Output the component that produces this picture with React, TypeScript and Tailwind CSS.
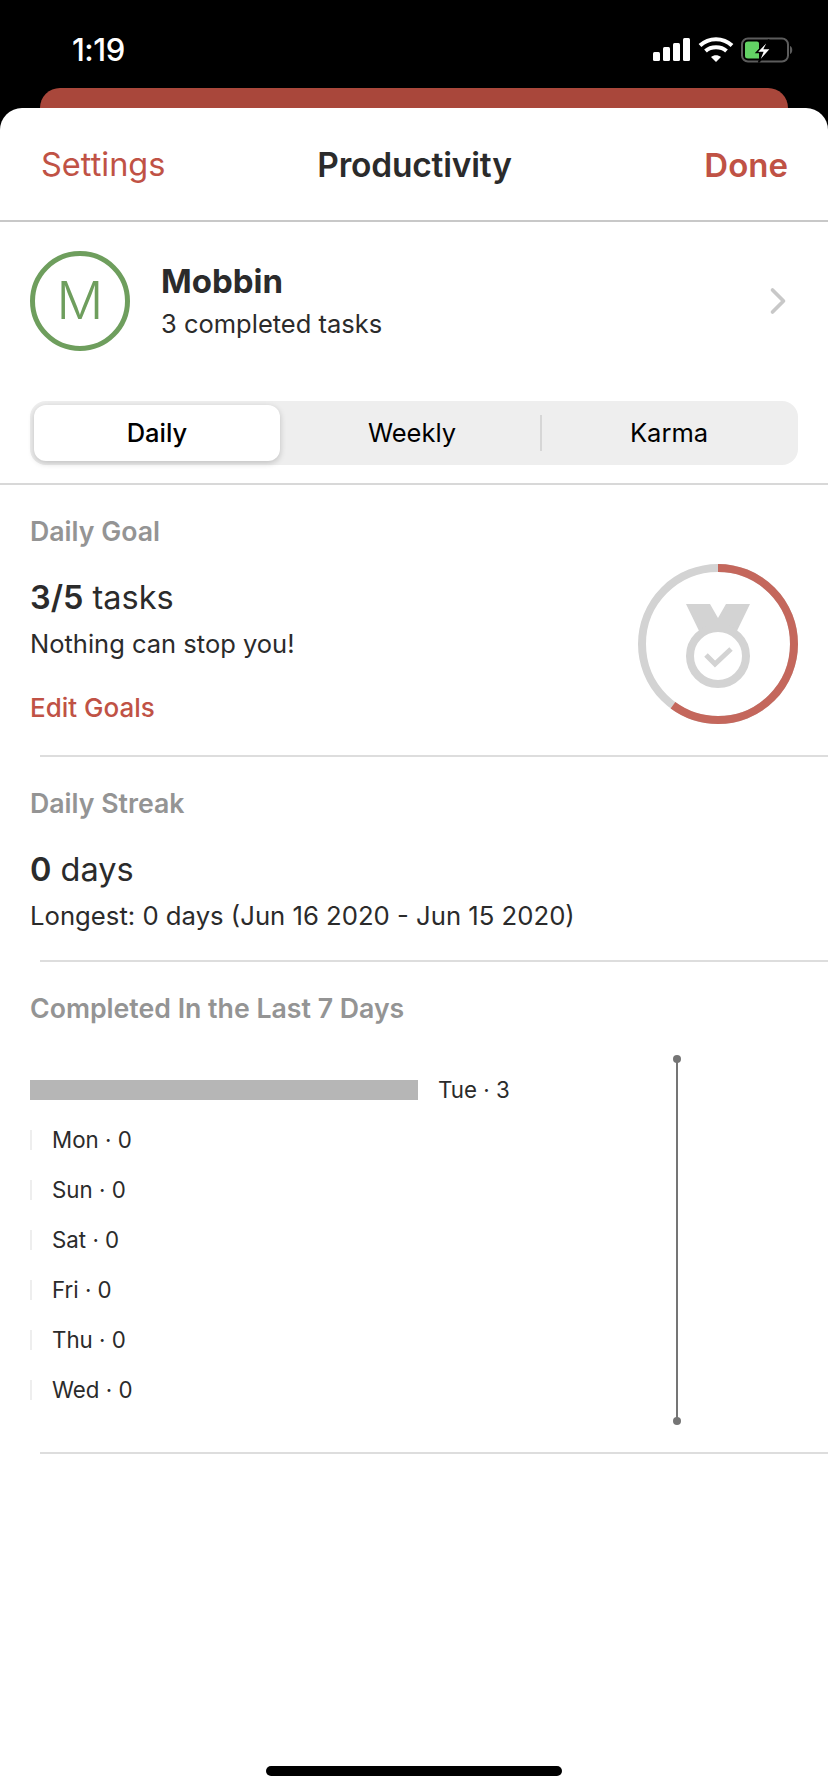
import { ChevronRight } from "lucide-react";

const days = ["Mon", "Sun", "Sat", "Fri", "Thu", "Wed"];

function StatusIcons() {
  return (
    <svg width="142" height="26" viewBox="0 0 142 26" className="block">
      {/* signal */}
      <rect x="1" y="15" width="7" height="9" rx="1.5" fill="#fff" />
      <rect x="11" y="10" width="7" height="14" rx="1.5" fill="#fff" />
      <rect x="21" y="6" width="7" height="18" rx="1.5" fill="#fff" />
      <rect x="31" y="1" width="7" height="23" rx="1.5" fill="#fff" />
      {/* wifi */}
      <path d="M48 8.5 C57 0 71 0 80 8.5" fill="none" stroke="#fff" strokeWidth="4" />
      <path d="M53.500 14 C59 9 69 9 74.500 14" fill="none" stroke="#fff" strokeWidth="4" />
      <path d="M59 20 C62 17.500 66 17.500 69 20 L64 25 Z" fill="#fff" />
      {/* battery */}
      <rect x="90" y="1.500" width="46" height="23" rx="6" fill="none" stroke="#5c5c5c" strokeWidth="2" />
      <path d="M138 9 C141 10 141 16 138 17 Z" fill="#5c5c5c" />
      <path d="M96 4.500 H105 Q107 4.500 107 6.500 V12 L103.500 16 H107 V21.500 H96 Q93 21.500 93 19 V7 Q93 4.500 96 4.500 Z" fill="#63d265" />
      <path d="M117 2.500 L104.500 15.500 H110.500 L106.500 25.500 L119 11.500 H112.500 Z" fill="#fff" stroke="#000" strokeWidth="1.500" />
    </svg>
  );
}

function Medal() {
  return (
    <svg width="160" height="160" viewBox="0 0 160 160" className="block">
      <circle cx="80" cy="80" r="76" fill="none" stroke="#d3d3d3" strokeWidth="8" />
      <circle
        cx="80"
        cy="80"
        r="76"
        fill="none"
        stroke="#c4675c"
        strokeWidth="8"
        strokeDasharray="286.500 477.500"
        transform="rotate(-90 80 80)"
      />
      <path d="M48 40 H72 L80 54 L88 40 H112 L97 71 C88 64 72 64 63 71 Z" fill="#d3d3d3" />
      <circle cx="80" cy="92" r="28" fill="none" stroke="#d3d3d3" strokeWidth="8" />
      <path d="M68 91 L77 100 L93 85" fill="none" stroke="#d3d3d3" strokeWidth="5" />
    </svg>
  );
}

export default function App() {
  return (
    <div className="h-[1792px] w-[828px] overflow-hidden bg-black font-['Inter','Liberation_Sans',sans-serif] text-[#2b2b2b]">
      <div className="flex h-[88px] items-start justify-between pl-[72px] pr-[34px] pt-[30px]">
        <span className="text-[31px] font-medium leading-[40px] tracking-[-0.5px] text-white">1:19</span>
        <div className="pt-[7px]">
          <StatusIcons />
        </div>
      </div>
      <div className="mx-10 h-10 rounded-t-[20px] bg-[#a9473b]" />
      <div className="-mt-5 h-[1684px] rounded-t-[22px] bg-white">
        <header className="grid h-[114px] grid-cols-3 items-center border-b-2 border-[#c8c8c8] pl-[41px] pr-[40px] pt-0.5 leading-[40px]">
          <span className="text-[32.500px] text-[#c05245]">Settings</span>
          <span className="text-center text-[33.500px] font-semibold tracking-[-0.2px]">Productivity</span>
          <span className="text-right text-[33px] font-semibold text-[#c05245]">Done</span>
        </header>

        <section className="flex items-center pl-[30px] pr-[28px] pt-[29px]">
          <div className="flex h-[100px] w-[100px] items-center justify-center rounded-full border-[5px] border-[#6e9e5d] text-[52px] font-light text-[#6e9e5d]">
            M
          </div>
          <div className="ml-[31px] flex-1">
            <div className="-mt-1 text-[33px] font-bold leading-[44px]">Mobbin</div>
            <div className="mt-[5px] text-[25.500px] leading-[32px]">3 completed tasks</div>
          </div>
          <ChevronRight className="h-11 w-11 text-[#c8c8c8]" strokeWidth={2} />
        </section>

        <div className="mx-[30px] mt-[50px] flex h-16 items-center rounded-[16px] bg-[#eeeeee] px-1 text-[25.500px] text-black">
          <div className="flex h-14 w-[246px] items-center justify-center rounded-[12px] bg-white font-medium shadow-[0_2px_6px_rgba(0,0,0,0.2)]">
            Daily
          </div>
          <div className="flex flex-1 items-center justify-center pl-1">Weekly</div>
          <div className="h-9 w-0.5 bg-[#d6d6d6]" />
          <div className="flex w-[252px] items-center justify-center pl-0.5">Karma</div>
        </div>

        <div className="mt-[18px] h-0.5 bg-[#d8d8d8]" />

        <section className="relative h-[270px] pl-[30px] pt-[30px]">
          <h2 className="text-[26.700px] font-semibold leading-[32px] text-[#949494]">Daily Goal</h2>
          <div className="mt-[31px] text-[32.500px] leading-[40px]">
            <span className="font-semibold">3/5</span> tasks
          </div>
          <div className="mt-[10px] text-[25.500px] leading-[32px]">Nothing can stop you!</div>
          <div className="mt-[32px] text-[26px] font-medium leading-[32px] text-[#c05245]">Edit Goals</div>
          <div className="absolute left-[638px] top-[79px]">
            <Medal />
          </div>
        </section>
        <div className="ml-10 h-0.5 bg-[#dddddd]" />

        <section className="h-[203px] pl-[30px] pt-[30px]">
          <h2 className="text-[26.700px] font-semibold leading-[32px] text-[#949494]">Daily Streak</h2>
          <div className="mt-[31px] text-[32.500px] leading-[40px]">
            <span className="font-semibold">0</span> days
          </div>
          <div className="mt-[10px] text-[25.700px] leading-[32px]">Longest: 0 days (Jun 16 2020 - Jun 15 2020)</div>
        </section>
        <div className="ml-10 h-0.5 bg-[#dddddd]" />

        <section className="relative h-[490px] pl-[30px] pt-[30px]">
          <h2 className="text-[26.700px] font-semibold leading-[32px] text-[#949494]">Completed In the Last 7 Days</h2>
          <div className="mt-14 flex flex-col gap-[30px] text-[22.300px]">
            <div className="flex h-5 items-center">
              <div className="h-5 w-[388px] bg-[#b6b6b6]" />
              <span className="ml-5">Tue · 3</span>
            </div>
            {days.map((day) => (
              <div key={day} className="flex h-5 items-center">
                <div className="h-5 w-0.5 bg-[#eeeeee]" />
                <span className="ml-5">{day} · 0</span>
              </div>
            ))}
          </div>
          <div className="absolute left-[676px] top-[97px] h-[362px] w-0.5 bg-[#757575]">
            <div className="absolute -left-[3px] -top-1 h-2 w-2 rounded-full bg-[#757575]" />
            <div className="absolute -bottom-1 -left-[3px] h-2 w-2 rounded-full bg-[#757575]" />
          </div>
        </section>
        <div className="ml-10 h-0.5 bg-[#dddddd]" />

        <div className="mx-auto mt-[312px] h-[10px] w-[296px] rounded-full bg-black" />
      </div>
    </div>
  );
}
